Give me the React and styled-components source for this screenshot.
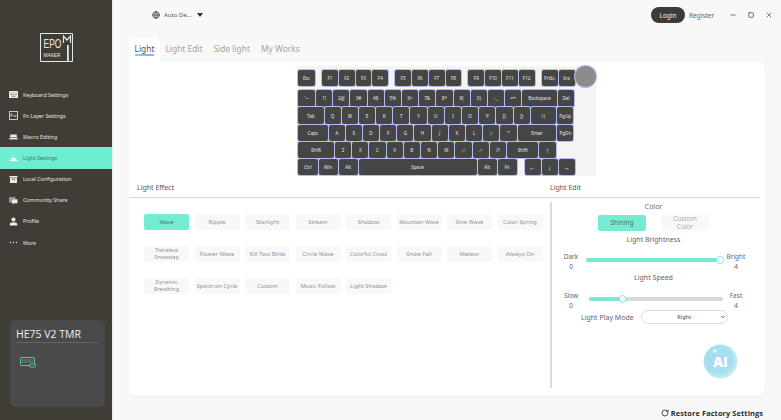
import React from "react";
import styled, { createGlobalStyle } from "styled-components";
import { ChevronDown, Minus, Square, X, RotateCw, Globe } from "lucide-react";

const menu = [
  { label: "Keyboard Settings", icon: "keyboard" },
  { label: "Fn Layer Settings", icon: "fn" },
  { label: "Macro Editing", icon: "macro" },
  { label: "Light Settings", icon: "light", active: true },
  { label: "Local Configuration", icon: "local" },
  { label: "Community Share", icon: "share" },
  { label: "Profile", icon: "profile" },
  { label: "More", icon: "more" },
];

const effects = [
  { name: "Wave", active: true }, { name: "Ripple" }, { name: "Starlight" }, { name: "Stream" },
  { name: "Shadow" }, { name: "Mountain Wave", size: 5.4 }, { name: "Sine Wave" }, { name: "Color Spring" },
  { name: "Traceless Snowstep", size: 5.4, pad: 6 }, { name: "Flower Wave" }, { name: "Kill Two Birds" }, { name: "Circle Wave" },
  { name: "Colorful Cross", size: 5.6 }, { name: "Snow Fall" }, { name: "Meteor" }, { name: "Always On" },
  { name: "Dynamic Breathing", size: 5.4, pad: 6 }, { name: "Spectrum Cycle", size: 5.6, nowrap: true }, { name: "Custom" }, { name: "Music Follow" },
  { name: "Light Shadow" },
];

// [label, width, left gap]
const rows = [
  [["Esc", 17], ["F1", 15.8, 6], ["F2", 15.8], ["F3", 15.8], ["F4", 15.8], ["F5", 15.8, 6], ["F6", 15.8], ["F7", 15.8], ["F8", 15.8], ["F9", 15.8, 6], ["F10", 15.8], ["F11", 15.8], ["F12", 15.8], ["PrtSc", 16, 6], ["Ins", 16]],
  [["`~", 17], ["1!", 16.2], ["2@", 16.2], ["3#", 16.2], ["4$", 16.2], ["5%", 16.2], ["6^", 16.2], ["7&", 16.2], ["8*", 16.2], ["9(", 16.2], ["0)", 16.2], ["-_", 16.2], ["=+", 16.2], ["Backspace", 34.8], ["Del", 16]],
  [["Tab", 25.5], ["Q", 16.2], ["W", 16.2], ["E", 16.2], ["R", 16.2], ["T", 16.2], ["Y", 16.2], ["U", 16.2], ["I", 16.2], ["O", 16.2], ["P", 16.2], ["[{", 16.2], ["]}", 16.2], ["\\|", 25.5], ["PgUp", 16]],
  [["Caps", 29.5], ["A", 16.2], ["S", 16.2], ["D", 16.2], ["F", 16.2], ["G", 16.2], ["H", 16.2], ["J", 16.2], ["K", 16.2], ["L", 16.2], [";:", 16.2], ["'\"", 16.2], ["Enter", 38.8], ["PgDn", 16]],
  [["Shift", 36], ["Z", 16.2], ["X", 16.2], ["C", 16.2], ["V", 16.2], ["B", 16.2], ["N", 16.2], ["M", 16.2], [",<", 16.2], [".>", 16.2], ["/?", 16.2], ["Shift", 31.6], ["↑", 16.2]],
  [["Ctrl", 19.6], ["Win", 19], ["Alt", 19], ["Space", 118], ["Alt", 19], ["Fn", 19], ["←", 16, 7], ["↓", 16], ["→", 16]],
];

const GlobalStyle = createGlobalStyle`
  html, body {
    margin: 0;
    padding: 0;
    background: #f8f8f8;
  }
  * {
    box-sizing: border-box;
  }
  body {
    font-family: "Noto Sans", "Open Sans", sans-serif;
  }
`;

const Page = styled.div`
  width: 781px;
  height: 420px;
  display: flex;
  overflow: hidden;
`;

const Sidebar = styled.aside`
  width: 113px;
  flex-shrink: 0;
  background: #3f3d36;
  border-right: 1px solid #e8e8e8;
  display: flex;
  flex-direction: column;
`;

const LogoWrap = styled.div`
  height: 84px;
  padding: 33px 0 0 40px;
`;

const Menu = styled.nav`
  display: flex;
  flex-direction: column;
`;

const MenuItem = styled.div`
  height: 21.15px;
  display: flex;
  align-items: center;
  gap: 5px;
  padding-left: 9px;
  font-size: 5.3px;
  white-space: nowrap;
  color: ${(p) => (p.$active ? "#3f6f68" : "#e6e6e2")};
  background: ${(p) => (p.$active ? "#6fedd3" : "transparent")};
`;

const DeviceCard = styled.div`
  margin: 67px 0 0 10px;
  width: 95px;
  height: 87px;
  border-radius: 5px;
  background: #4a4a4a;
  padding: 7px 7px 0 6px;
`;

const DeviceName = styled.div`
  font-family: "Open Sans", sans-serif;
  font-size: 10.5px;
  line-height: 14px;
  color: #efefef;
  padding-bottom: 1px;
  border-bottom: 1.5px solid #646464;
  white-space: nowrap;
`;

const DeviceIcon = styled.div`
  margin: 14px 0 0 4px;
  line-height: 0;
`;

const Main = styled.main`
  flex: 1;
  min-width: 0;
  display: flex;
  flex-direction: column;
  padding: 0 16px;
`;

const TopBar = styled.header`
  height: 38px;
  flex-shrink: 0;
  display: flex;
  align-items: flex-start;
  padding-top: 7px;
`;

const Language = styled.div`
  margin-left: 23px;
  height: 16px;
  display: flex;
  align-items: center;
  gap: 4px;
  font-size: 6px;
  color: #555;
`;

const Caret = styled.span`
  width: 0;
  height: 0;
  margin-left: 1px;
  border-left: 3px solid transparent;
  border-right: 3px solid transparent;
  border-top: 4px solid #333;
`;

const TopRight = styled.div`
  margin-left: auto;
  margin-right: -13px;
  height: 16px;
  display: flex;
  align-items: center;
`;

const LoginButton = styled.button`
  width: 34px;
  height: 16px;
  border: 0;
  border-radius: 8px;
  padding: 0;
  background: #3b3b3b;
  color: #eee;
  font-family: inherit;
  font-size: 6.5px;
`;

const RegisterLink = styled.span`
  margin-left: 4px;
  width: 35px;
  font-size: 6.5px;
  color: #666;
`;

const WindowButton = styled.span`
  width: 18px;
  display: flex;
  justify-content: center;
  color: #444;
`;

const Tabs = styled.div`
  height: 24px;
  flex-shrink: 0;
  display: flex;
`;

const Tab = styled.div`
  position: relative;
  height: 24px;
  padding: 3px 5.5px 0;
  border-radius: 5px 5px 0 0;
  font-size: 8.4px;
  line-height: 15px;
  white-space: nowrap;
  color: ${(p) => (p.$active ? "#4a5a5a" : "#a4a4a4")};
  background: ${(p) => (p.$active ? "#fff" : "transparent")};
`;

const TabLine = styled.span`
  position: absolute;
  left: 5.5px;
  right: 5.5px;
  top: 16px;
  height: 2px;
  background: linear-gradient(90deg, #6fe3cf, #98a8ea);
`;

const Card = styled.section`
  width: 636px;
  height: 334px;
  flex-shrink: 0;
  background: #fff;
  border-radius: 0 6px 6px 6px;
  box-shadow: 0 1px 2px rgba(0, 0, 0, 0.05);
  padding-top: 4px;
`;

const KeyboardPanel = styled.div`
  width: 299px;
  height: 110px;
  margin-left: 168px;
  padding: 4px 0 0 1px;
  background: #f4f4f4;
  position: relative;
`;

const KeyRow = styled.div`
  height: 16.3px;
  display: flex;
  gap: 1px;
  margin-bottom: ${(p) => (p.$first ? "4px" : "0.9px")};
`;

const Key = styled.div`
  width: ${(p) => p.$w}px;
  margin-left: ${(p) => p.$gap || 0}px;
  height: 100%;
  flex-shrink: 0;
  border-radius: 2px;
  background: #454545;
  box-shadow: 0 0 0 1px #b4bdf0;
  color: #e8e8e8;
  font-size: ${(p) => (p.$arrow ? "7px" : "4.6px")};
  display: flex;
  align-items: center;
  justify-content: center;
  white-space: nowrap;
  overflow: hidden;
`;

const Knob = styled.div`
  position: absolute;
  left: 278px;
  top: 0;
  width: 21px;
  height: 21px;
  border-radius: 50%;
  background: #8c8c8c;
  box-shadow: 0 0 0 1px #b4bdf0;
`;

const Columns = styled.div`
  display: grid;
  grid-template-columns: 421px 210px;
  margin-top: 6px;
`;

const SectionTitle = styled.div`
  height: 16px;
  padding-left: ${(p) => p.$pad || 0}px;
  font-size: 7px;
  line-height: 11px;
  color: #555;
  border-bottom: 1.5px solid #d5d5d5;
`;

const EffectGrid = styled.div`
  display: grid;
  grid-template-columns: repeat(8, 45px);
  grid-auto-rows: 16px;
  column-gap: 5.5px;
  row-gap: 16px;
  padding: 16px 0 0 15px;
`;

const EffectButton = styled.button`
  border: 0;
  padding: 0 ${(p) => p.$pad || 0}px;
  border-radius: 2px;
  font-family: inherit;
  font-size: ${(p) => p.$size}px;
  line-height: 7px;
  white-space: ${(p) => (p.$nowrap ? "nowrap" : "normal")};
  color: ${(p) => (p.$active ? "#3b7b6c" : "#939393")};
  background: ${(p) => (p.$active ? "#77ebd2" : "#f8f8f8")};
`;

const EditPanel = styled.div`
  height: 186px;
  margin-top: 4px;
  border-left: 2px solid #dcdcdc;
  padding: 0 0 0 6px;
  width: 205px;
  display: flex;
  flex-direction: column;
  align-items: center;
  color: #666;
  font-size: 7px;
`;

const Heading = styled.div`
  line-height: 10px;
  margin-top: ${(p) => p.$top || 0}px;
  margin-right: 6px;
  white-space: nowrap;
`;

const ColorModes = styled.div`
  display: flex;
  gap: 15px;
  margin: 3px 6px 4px 0;
`;

const ModeButton = styled.button`
  width: 48px;
  height: 16px;
  border: 0;
  border-radius: 2px;
  padding: 0 8px;
  font-family: inherit;
  font-size: 6.5px;
  line-height: 8px;
  color: ${(p) => (p.$active ? "#3b7b6c" : "#a8a8a8")};
  background: ${(p) => (p.$active ? "#77ebd2" : "#f8f8f8")};
`;

const SliderRow = styled.div`
  width: 191px;
  margin: ${(p) => p.$top}px 6px 0 0;
  display: grid;
  grid-template-columns: 26px 1fr 26px;
  align-items: center;
`;

const SliderEnd = styled.div`
  text-align: center;
  font-size: 6.5px;
  line-height: 9.5px;
  white-space: pre-line;
`;

const Track = styled.div`
  position: relative;
  height: 3.5px;
  margin: -3px 0 0 ${(p) => p.$inset}px;
  border-radius: 2px;
  background: #d8d8d8;
`;

const TrackFill = styled.div`
  height: 100%;
  border-radius: 2px;
  background: #77ebd2;
`;

const Thumb = styled.span`
  position: absolute;
  top: -2px;
  width: 7.5px;
  height: 7.5px;
  margin-left: -4px;
  border-radius: 50%;
  background: #fff;
  border: 1px solid #77ebd2;
`;

const PlayMode = styled.div`
  display: flex;
  align-items: center;
  gap: 7px;
  margin: 0 0 0 23px;
  align-self: flex-start;
  white-space: nowrap;
`;

const SelectBox = styled.div`
  position: relative;
  width: 87px;
  height: 14px;
`;

const PlaySelect = styled.select`
  width: 100%;
  height: 100%;
  border: 1px solid #ddd;
  border-radius: 7px;
  background: #fff;
  color: #444;
  font-family: inherit;
  font-size: 5.5px;
  text-align: center;
  padding: 0;
  appearance: none;
`;

const SelectArrow = styled(ChevronDown)`
  position: absolute;
  right: 2px;
  top: 4px;
  color: #333;
`;

const AiRow = styled.div`
  align-self: flex-end;
  margin: 20px 17px 0 0;
  line-height: 0;
`;

const Footer = styled.footer`
  margin: 12px 2px 0 0;
  display: flex;
  justify-content: flex-end;
  align-items: center;
  gap: 2px;
  font-family: "Open Sans", sans-serif;
  font-size: 7.4px;
  font-weight: 700;
  color: #2c2c2c;
  letter-spacing: 0.1px;
`;

function Logo() {
  return (
    <svg width="33" height="29" viewBox="0 0 33 29" fill="none" stroke="#e8e8e2">
      <path d="M27.500 12v16.500H.5V.5h32v28h-4.200V12" />
      <text x="3.500" y="15" fontFamily="Liberation Sans, sans-serif" fontSize="13" fill="#e8e8e2" stroke="none" textLength="18" lengthAdjust="spacingAndGlyphs">EPO</text>
      <path d="M23.500 10V3l3.500 4 3.500-4v7" strokeWidth="1.200" />
      <text x="3.500" y="24" fontFamily="Liberation Sans, sans-serif" fontSize="6" fill="#e8e8e2" stroke="none" textLength="17" lengthAdjust="spacingAndGlyphs">MAKER</text>
    </svg>
  );
}

function MenuIcon({ name, color }) {
  const shapes = {
    keyboard: (
      <>
        <rect x="0" y="1" width="9" height="7" rx=".6" fill={color} />
        <path d="M1 3h7M1 4.500h7" stroke="#3f3d36" strokeWidth=".5" strokeDasharray=".8 .4" />
        <path d="M2.500 6.200h4" stroke="#3f3d36" strokeWidth=".7" />
      </>
    ),
    fn: (
      <>
        <rect x=".5" y=".5" width="8" height="8" fill="none" stroke={color} strokeWidth=".8" />
        <path d="M2 3h2M2 3v3M2 4.500h1.400M5 6V4l2 2V4" stroke={color} strokeWidth=".6" fill="none" />
      </>
    ),
    macro: (
      <>
        <path d="M1.500 2.500h6L8 5H1z" fill={color} />
        <rect x=".5" y="5.600" width="8" height="1.800" fill={color} />
      </>
    ),
    light: (
      <>
        <path d="M2 7a2.500 2.500 0 0 1 5 0z" fill={color} />
        <rect x=".5" y="7" width="8" height="1.200" fill={color} />
        <path d="M4.500 1v1.400M1.500 2.500l1 1M7.500 2.500l-1 1" stroke={color} strokeWidth=".6" />
      </>
    ),
    local: (
      <>
        <rect x=".5" y="1" width="8" height="1.600" fill={color} />
        <path d="M1 3.200h7V8H1z" fill={color} />
        <path d="M3 4.600h3" stroke="#3f3d36" strokeWidth=".6" />
      </>
    ),
    share: (
      <>
        <path d="M.5 1.500h6v1H1.600v4H.5z" fill={color} />
        <rect x="2.500" y="3.200" width="6" height="4" rx=".5" fill={color} />
        <path d="M4 7.200v1.300l1.400-1.300z" fill={color} />
      </>
    ),
    profile: (
      <>
        <circle cx="4.500" cy="2.600" r="2" fill={color} />
        <path d="M.8 8.500V7c0-1 1.400-1.800 3.700-1.800S8.200 6 8.200 7v1.500z" fill={color} />
      </>
    ),
    more: (
      <>
        <circle cx="1.500" cy="4.500" r=".7" fill={color} />
        <circle cx="4.500" cy="4.500" r=".7" fill={color} />
        <circle cx="7.500" cy="4.500" r=".7" fill={color} />
      </>
    ),
  };
  return (
    <svg width="9" height="9" viewBox="0 0 9 9">
      {shapes[name]}
    </svg>
  );
}

function KeyboardIcon() {
  return (
    <svg width="16" height="11" viewBox="0 0 16 11" fill="none" stroke="#6fd9bf" strokeWidth=".8">
      <rect x=".5" y=".5" width="14" height="8" rx=".8" />
      <path d="M2 3h11M2 5h11" strokeDasharray="1 .6" />
      <rect x="9.500" y="7" width="6" height="3" rx=".8" fill="#4a4a4a" />
    </svg>
  );
}

function AiBubble() {
  return (
    <svg width="35" height="35" viewBox="0 0 35 35">
      <defs>
        <radialGradient id="bubble" cx="45%" cy="45%" r="60%">
          <stop offset="0%" stopColor="#b4d8f6" />
          <stop offset="65%" stopColor="#a4dff0" />
          <stop offset="100%" stopColor="#d2f3e8" />
        </radialGradient>
      </defs>
      <circle cx="17.500" cy="17.500" r="17" fill="url(#bubble)" />
      <circle cx="12" cy="7" r="1.800" fill="#e6f8f8" />
      <text x="17.500" y="22.500" textAnchor="middle" fontFamily="Open Sans, sans-serif" fontWeight="800" fontSize="13.500" fill="#fff">AI</text>
    </svg>
  );
}

function Slider({ left, right, value, inset, top }) {
  return (
    <SliderRow $top={top}>
      <SliderEnd>{left}</SliderEnd>
      <Track $inset={inset}>
        <TrackFill style={{ width: `${value}%` }} />
        <Thumb style={{ left: `${value}%` }} />
      </Track>
      <SliderEnd>{right}</SliderEnd>
    </SliderRow>
  );
}

export default function App() {
  return (
    <Page>
      <GlobalStyle />
      <Sidebar>
        <LogoWrap>
          <Logo />
        </LogoWrap>
        <Menu>
          {menu.map((item) => (
            <MenuItem key={item.label} $active={item.active}>
              <MenuIcon name={item.icon} color={item.active ? "#fff" : "#ececec"} />
              {item.label}
            </MenuItem>
          ))}
        </Menu>
        <DeviceCard>
          <DeviceName>HE75 V2 TMR</DeviceName>
          <DeviceIcon>
            <KeyboardIcon />
          </DeviceIcon>
        </DeviceCard>
      </Sidebar>
      <Main>
        <TopBar>
          <Language>
            <Globe size={8} color="#444" strokeWidth={2.5} />
            Auto De...
            <Caret />
          </Language>
          <TopRight>
            <LoginButton>Login</LoginButton>
            <RegisterLink>Register</RegisterLink>
            <WindowButton><Minus size={8} /></WindowButton>
            <WindowButton><Square size={6} strokeWidth={3} /></WindowButton>
            <WindowButton><X size={8} /></WindowButton>
          </TopRight>
        </TopBar>
        <Tabs>
          <Tab $active>
            Light
            <TabLine />
          </Tab>
          <Tab>Light Edit</Tab>
          <Tab>Side light</Tab>
          <Tab>My Works</Tab>
        </Tabs>
        <Card>
          <KeyboardPanel>
            {rows.map((row, i) => (
              <KeyRow key={i} $first={i === 0}>
                {row.map(([label, w, gap], j) => (
                  <Key key={j} $w={w} $gap={gap} $arrow={"←↑↓→".includes(label)}>{label}</Key>
                ))}
              </KeyRow>
            ))}
            <Knob />
          </KeyboardPanel>
          <Columns>
            <div>
              <SectionTitle $pad={8}>Light Effect</SectionTitle>
              <EffectGrid>
                {effects.map((effect) => (
                  <EffectButton key={effect.name} $active={effect.active} $size={effect.size || 5.8} $nowrap={effect.nowrap} $pad={effect.pad}>
                    {effect.name}
                  </EffectButton>
                ))}
              </EffectGrid>
            </div>
            <div>
              <SectionTitle>Light Edit</SectionTitle>
              <EditPanel>
                <Heading>Color</Heading>
                <ColorModes>
                  <ModeButton $active>Shining</ModeButton>
                  <ModeButton>Custom Color</ModeButton>
                </ColorModes>
                <Heading>Light Brightness</Heading>
                <Slider left={"Dark\n0"} right={"Bright\n4"} value={98} inset={2} top={7} />
                <Heading $top={2}>Light Speed</Heading>
                <Slider left={"Slow\n0"} right={"Fast\n4"} value={25} inset={5} top={8} />
                <PlayMode>
                  Light Play Mode
                  <SelectBox>
                    <PlaySelect defaultValue="Right">
                      <option>Right</option>
                      <option>Left</option>
                    </PlaySelect>
                    <SelectArrow size={6} strokeWidth={3} />
                  </SelectBox>
                </PlayMode>
                <AiRow>
                  <AiBubble />
                </AiRow>
              </EditPanel>
            </div>
          </Columns>
        </Card>
        <Footer>
          <RotateCw size={8} strokeWidth={2.5} />
          Restore Factory Settings
        </Footer>
      </Main>
    </Page>
  );
}
